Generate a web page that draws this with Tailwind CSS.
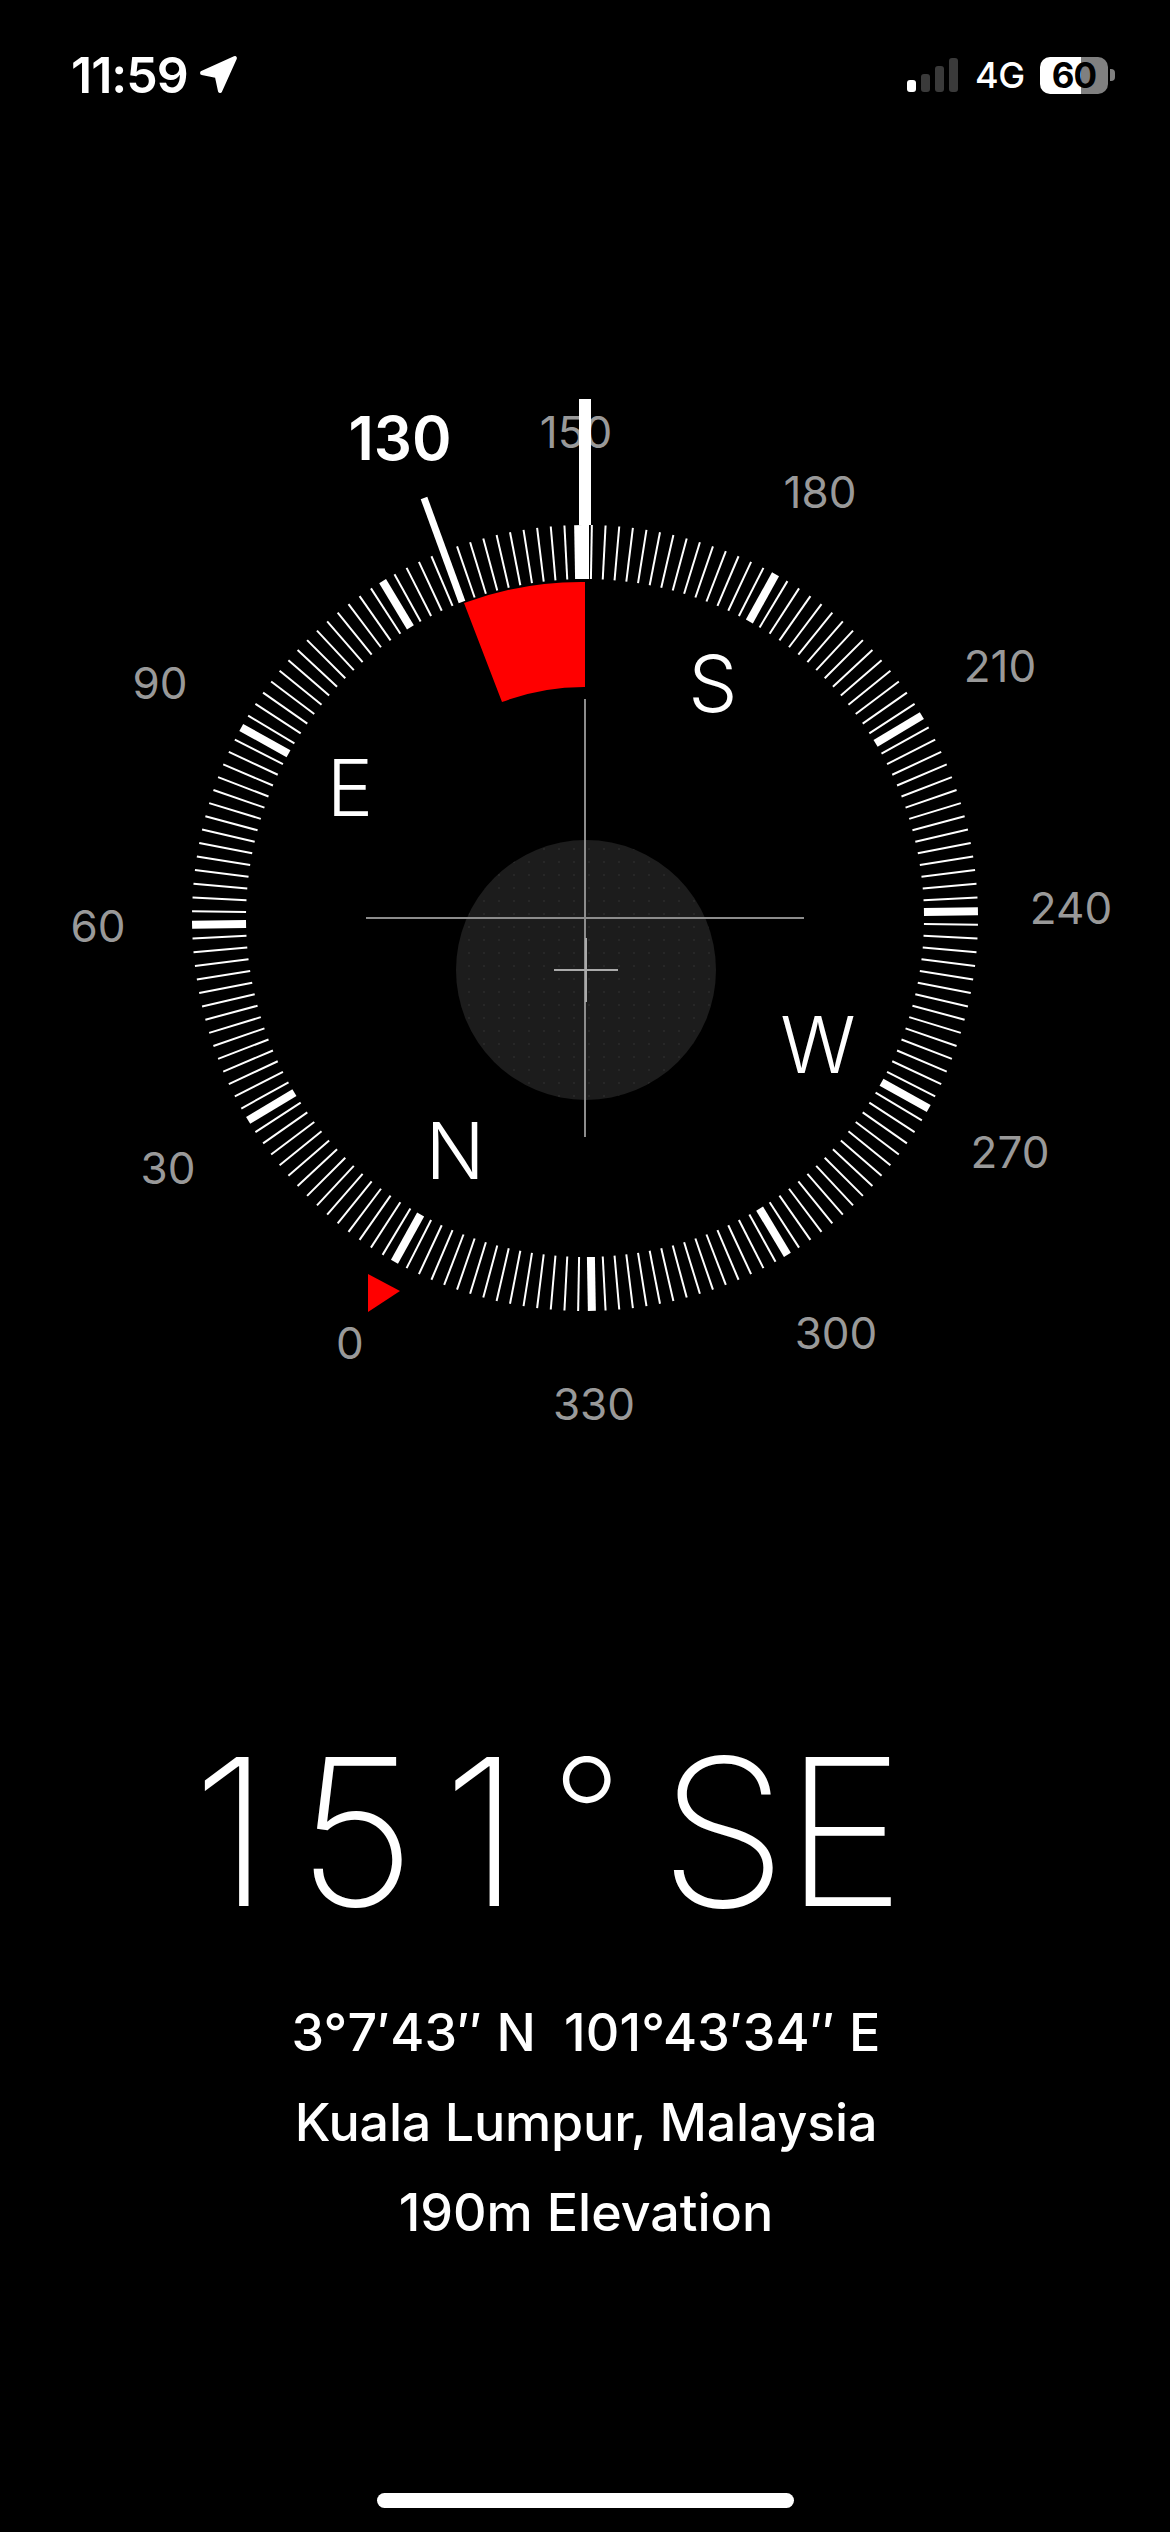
<!DOCTYPE html>
<html lang="en">
<head>
    <meta charset="utf-8">
    <meta name="viewport" content="width=device-width, initial-scale=1">
    <title>Compass</title>
    <script src="https://cdn.jsdelivr.net/npm/@tailwindcss/browser@4"></script>
</head>
<body class="bg-black">
    <div class="w-[1170px] h-[2532px] bg-black text-white flex flex-col font-['Inter',sans-serif]">

        <!-- Status bar -->
        <header class="h-[120px] shrink-0 pt-[50px] pl-[71px] pr-[55px] flex justify-between items-start">
            <div class="flex items-center gap-[11px] h-[50px]">
                <span class="text-[50px] leading-[50px] font-semibold tracking-[-1px]">11:59</span>
                <svg width="40" height="40" viewBox="0 0 38 38" class="fill-white stroke-white">
                    <path d="M3 17 L34 3 L20 34 L17 20 Z" stroke-width="4" stroke-linejoin="round"></path>
                </svg>
            </div>
            <div class="flex items-center h-[50px]">
                <div class="flex items-end gap-[5px] h-[34px] mr-[17px]">
                    <span class="w-[9px] h-[12px] rounded-[3px] bg-white"></span>
                    <span class="w-[9px] h-[18px] rounded-[3px] bg-[#3a3a3a]"></span>
                    <span class="w-[9px] h-[26px] rounded-[3px] bg-[#3a3a3a]"></span>
                    <span class="w-[9px] h-[34px] rounded-[3px] bg-[#3a3a3a]"></span>
                </div>
                <span class="w-[48px] text-[36px] leading-[50px] font-medium tracking-[-0.5px] whitespace-nowrap mr-[17px]">4G</span>
                <div class="w-[68px] h-[37px] rounded-[10px] bg-[linear-gradient(to_right,#ffffff_60%,#808080_60%)] flex items-center justify-center">
                    <span class="text-[35px] leading-none font-bold tracking-[-1px] text-black">60</span>
                </div>
                <span class="w-[5px] h-[12px] ml-[2px] rounded-r-[4px] bg-[#808080]"></span>
            </div>
        </header>

        <!-- Compass dial, coordinates in the viewBox are the page's -->
        <svg id="dial" width="1170" height="1400" viewBox="0 120 1170 1400" class="block shrink-0">
            <defs>
                <pattern id="dots" width="15" height="13" patternUnits="userSpaceOnUse">
                    <circle cx="4" cy="4" r="0.8" class="fill-[#343434]"></circle>
                </pattern>
            </defs>

            <circle cx="586" cy="970" r="130" class="fill-[#1c1c1c]"></circle>
            <circle cx="586" cy="970" r="130" fill="url(#dots)"></circle>

            <g id="ticks" class="stroke-white"></g>

            <g class="text-[44px] fill-[#999999]" text-anchor="middle">
                <text x="576" y="448">150</text>
                <text x="820" y="508">180</text>
                <text x="1000" y="682">210</text>
                <text x="1071" y="924">240</text>
                <text x="1010" y="1168">270</text>
                <text x="836" y="1349">300</text>
                <text x="594" y="1420">330</text>
                <text x="350" y="1359">0</text>
                <text x="168" y="1184">30</text>
                <text x="98" y="942">60</text>
                <text x="160" y="699">90</text>
            </g>
            <text x="400" y="460" text-anchor="middle" class="text-[60px] font-semibold fill-white">130</text>

            <g class="text-[78px] font-[350] fill-white" text-anchor="middle">
                <text x="713" y="712">S</text>
                <text x="350" y="816">E</text>
                <text x="818" y="1073">W</text>
                <text x="455" y="1179">N</text>
            </g>

            <!-- heading pointers and the red drift sector -->
            <path d="M464 603 A337 337 0 0 1 585 582 L585 687 A231 231 0 0 0 502 702 Z" class="fill-[#ff0000]"></path>
            <rect x="579" y="399" width="12" height="126" class="fill-white"></rect>
            <rect x="582" y="525" width="7" height="54" class="fill-white"></rect>
            <line x1="424" y1="498" x2="462" y2="602" stroke-width="7" class="stroke-white"></line>
            <path d="M368 1274 L400 1291 L368 1312 Z" class="fill-[#ff0000]"></path>

            <!-- crosshairs -->
            <g stroke-width="2" class="stroke-[#8c8c8c]">
                <line x1="585" y1="699" x2="585" y2="1137"></line>
                <line x1="366" y1="918" x2="804" y2="918"></line>
            </g>
            <g stroke-width="2" class="stroke-[#aaaaaa]">
                <line x1="586" y1="938" x2="586" y2="1002"></line>
                <line x1="554" y1="970" x2="618" y2="970"></line>
            </g>
        </svg>

        <!-- Heading and location -->
        <div class="h-[250px] pl-[192px] text-[205px] leading-[250px] font-extralight whitespace-nowrap mt-[186px]"><span class="tracking-[27px]">15</span><span>1</span><span class="text-[155px] leading-none align-[36px] ml-[31px]">°</span> <span class="-ml-[20px] tracking-[-3px]">SE</span></div>
        <div class="flex flex-col items-center pl-[2px] mt-[32px] text-[52px] leading-[90px] font-medium">
            <span class="whitespace-pre tracking-[0.2px]">3°7′43″ N  101°43′34″ E</span>
            <span class="tracking-[-0.2px]">Kuala Lumpur, Malaysia</span>
            <span>190m Elevation</span>
        </div>

        <div class="mt-auto mb-[24px] mx-auto w-[417px] h-[15px] rounded-full bg-white"></div>
    </div>

    <script>
        // ring of ticks, one every 2 degrees, heavier every 30
        const cx = 585, cy = 918, heading = 151;
        const ticks = document.getElementById("ticks");
        for (let deg = 0; deg < 360; deg += 2) {
            if (deg === 130) continue;
            const a = (deg - heading) * Math.PI / 180;
            const line = document.createElementNS("http://www.w3.org/2000/svg", "line");
            line.setAttribute("x1", cx + 339 * Math.sin(a));
            line.setAttribute("y1", cy - 339 * Math.cos(a));
            line.setAttribute("x2", cx + 393 * Math.sin(a));
            line.setAttribute("y2", cy - 393 * Math.cos(a));
            line.setAttribute("stroke-width", deg % 30 === 0 ? 8 : 2);
            ticks.appendChild(line);
        }
    </script>
</body>
</html>
